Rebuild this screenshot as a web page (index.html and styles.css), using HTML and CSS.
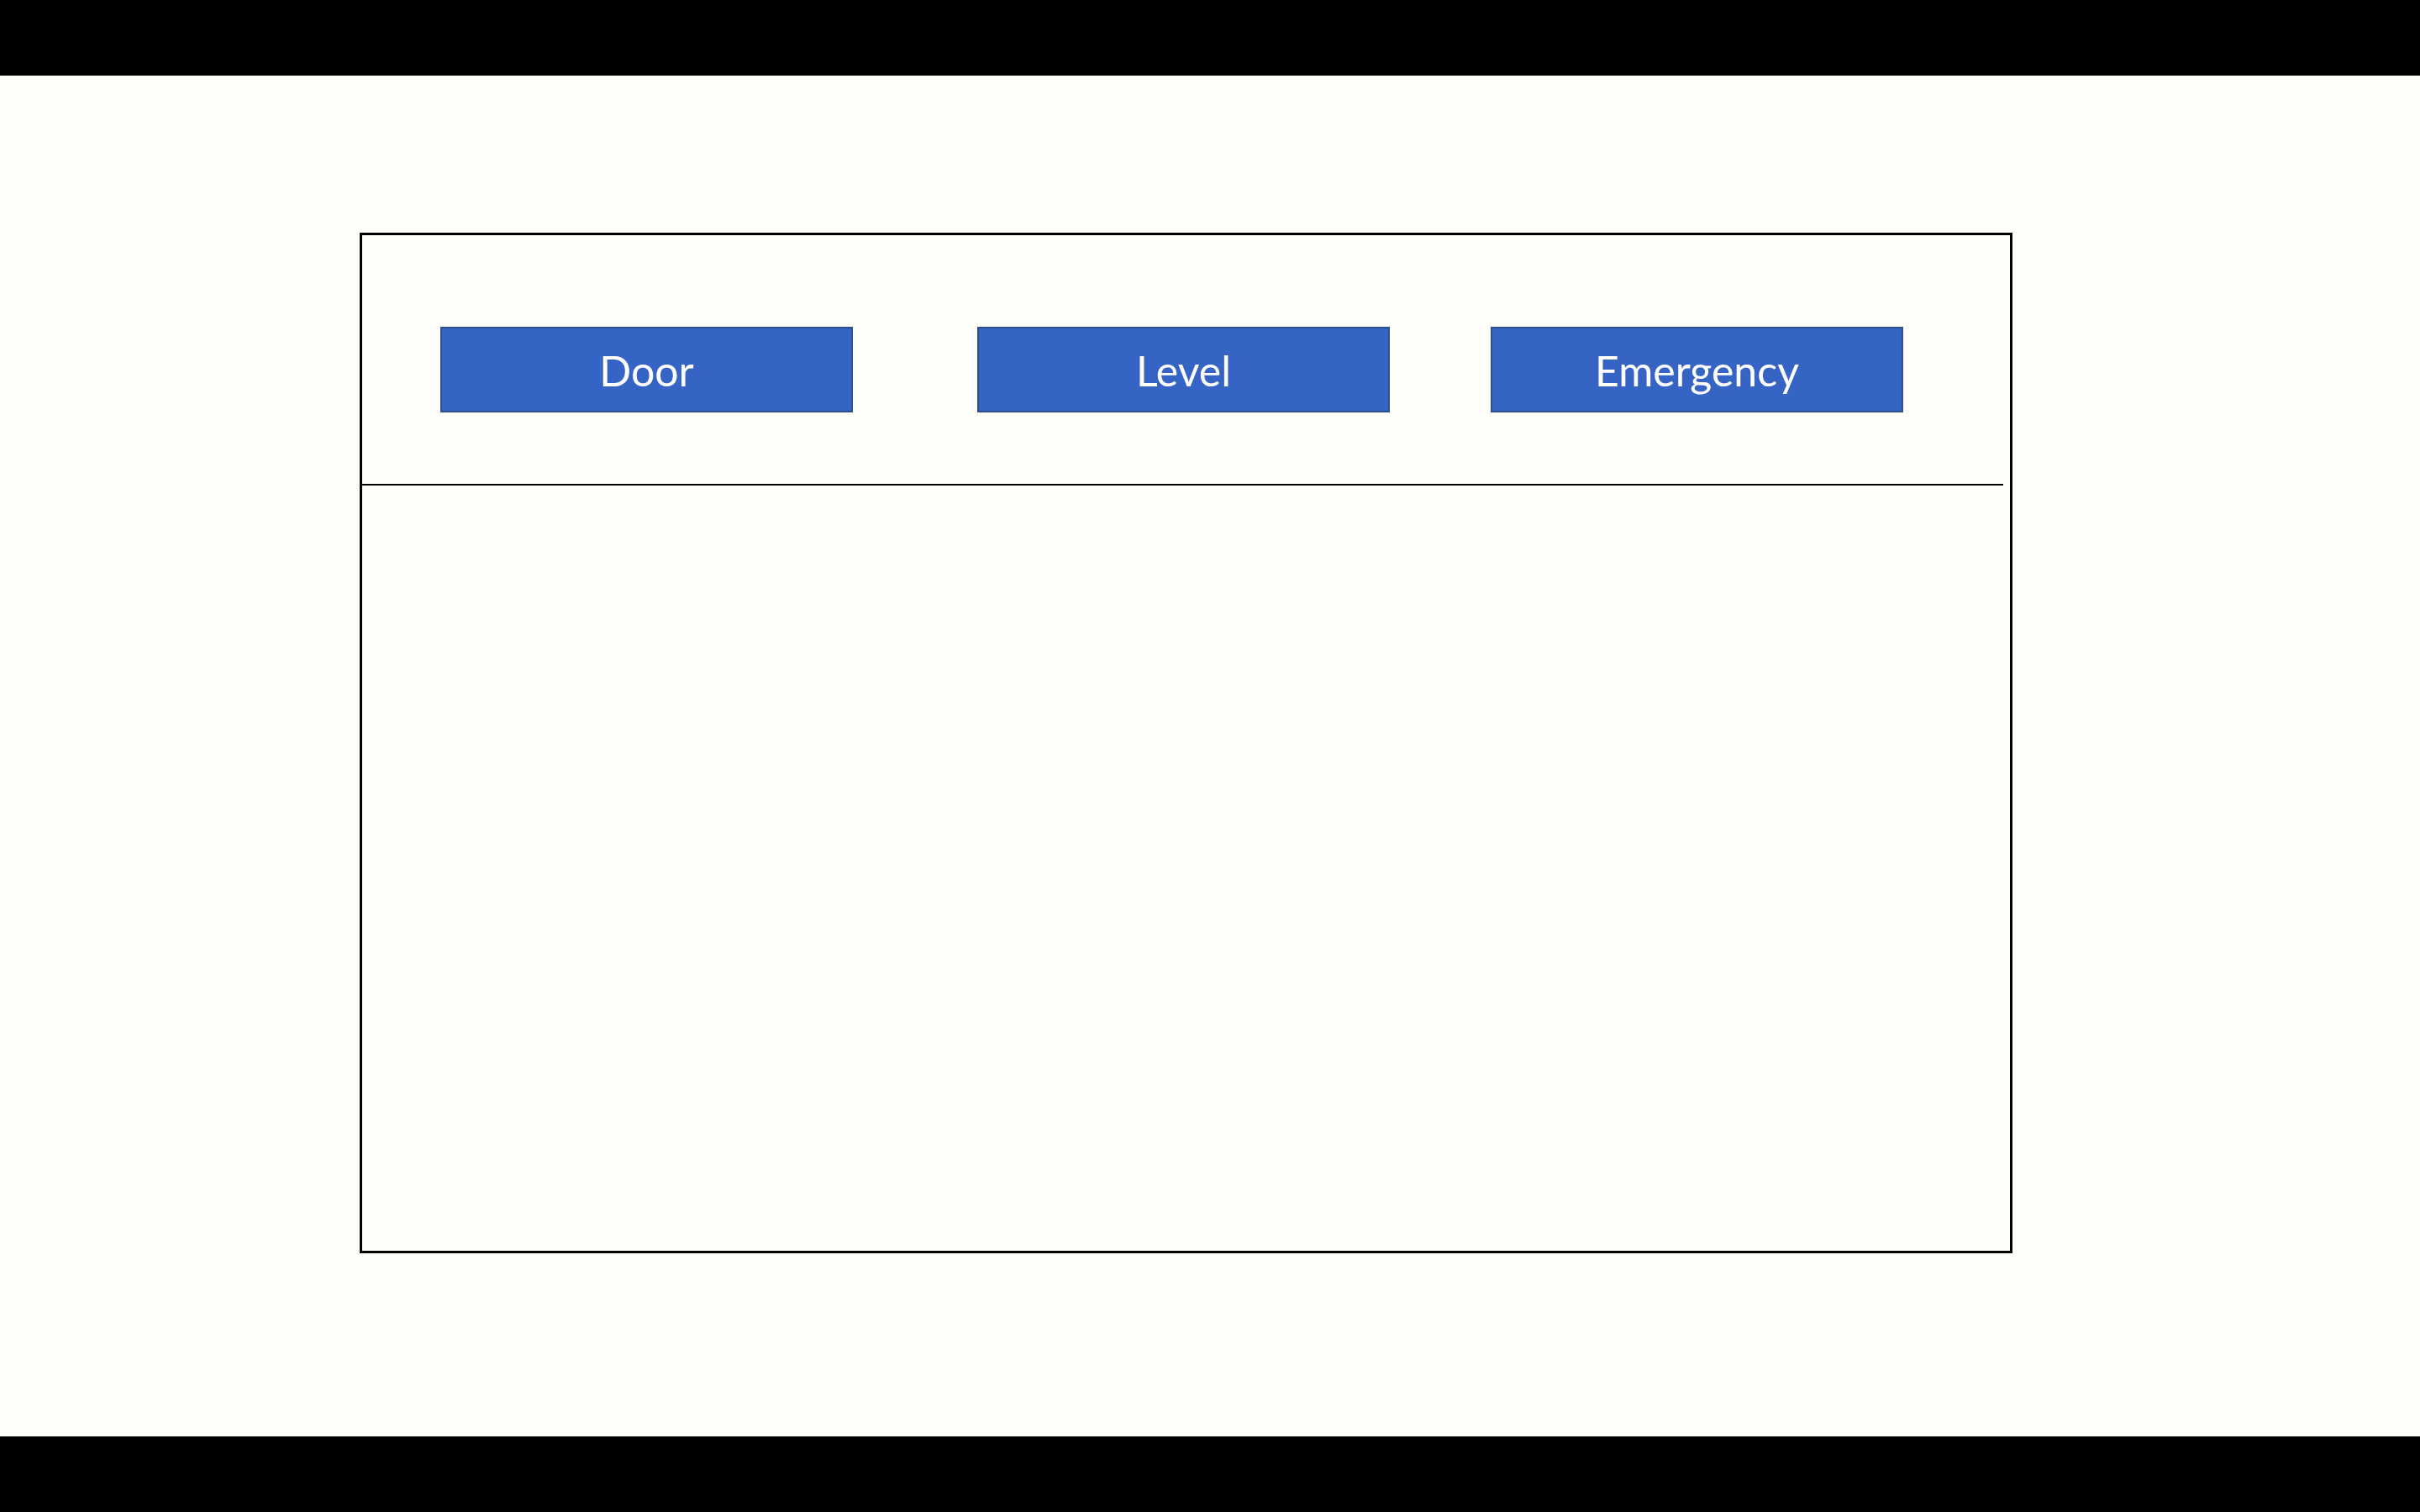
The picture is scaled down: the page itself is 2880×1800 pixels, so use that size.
FILE: index.html
```html
<!DOCTYPE html>
<html>
<head>
<meta charset="utf-8">
<link rel="stylesheet" href="styles.css">
</head>
<body>
<div class="bar"></div>
<div class="stage">
  <div class="frame">
    <div class="toolbar">
      <div class="btn btn-door">Door</div>
      <div class="btn btn-level">Level</div>
      <div class="btn btn-emergency">Emergency</div>
    </div>
    <div class="divider"></div>
  </div>
</div>
<div class="bar"></div>
</body>
</html>
```

FILE: styles.css
```css
html, body {
  margin: 0;
  padding: 0;
  background: #000;
}
.bar {
  height: 90px;
  background: #000;
}
.stage {
  height: 1620px;
  background-color: #fdfdfa;
  padding-top: 187px;
  padding-left: 428px;
  box-sizing: border-box;
}
.frame {
  width: 1967px;
  height: 1215px;
  border: 3px solid #000;
  box-sizing: border-box;
}
.toolbar {
  display: flex;
  padding-top: 109px;
  padding-left: 93px;
  height: 102px;
}
.btn {
  width: 491px;
  height: 102px;
  box-sizing: border-box;
  background: #3664c4;
  border: 2px solid #2f4f8f;
  color: #fff;
  font-family: Lato, "Liberation Sans", sans-serif;
  font-size: 50px;
  display: flex;
  align-items: center;
  justify-content: center;
  padding-top: 2px;
}
.btn-level { margin-left: 148px; }
.btn-emergency { margin-left: 120px; }
.divider {
  margin-top: 85px;
  width: 1953px;
  height: 2px;
  background: #000;
}
```
